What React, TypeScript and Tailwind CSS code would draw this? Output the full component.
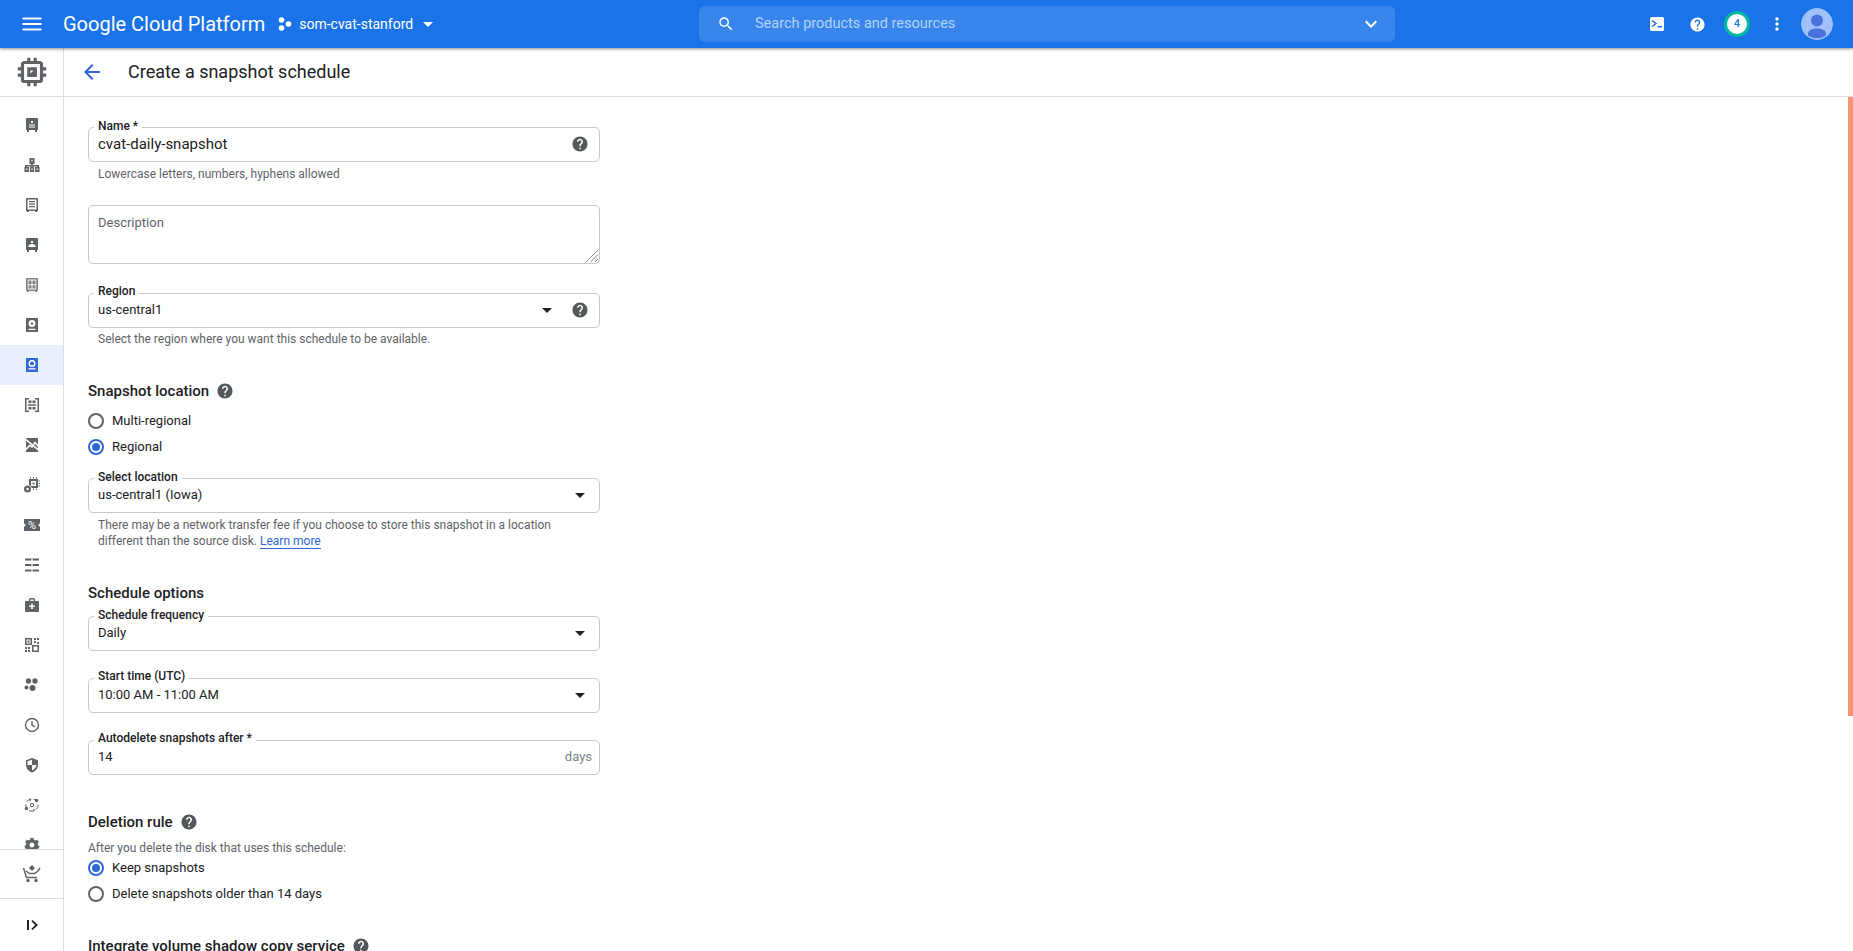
import type { ReactNode } from "react";

const HELP_PATH =
	"M12 2C6.48 2 2 6.48 2 12s4.48 10 10 10 10-4.48 10-10S17.52 2 12 2zm1 17h-2v-2h2v2zm2.07-7.75l-.9.92C13.45 12.9 13 13.5 13 15h-2v-.5c0-1.1.45-2.1 1.17-2.83l1.24-1.26c.37-.36.59-.86.59-1.41 0-1.1-.9-2-2-2s-2 .9-2 2H8c0-2.21 1.79-4 4-4s4 1.79 4 4c0 .88-.36 1.68-.93 2.25z";

function Help({ className = "", size = 18 }: { className?: string; size?: number }) {
	return (
		<svg width={size} height={size} viewBox="0 0 24 24" fill="currentColor" className={`shrink-0 text-[#54585c] ${className}`}>
			<path d={HELP_PATH} />
		</svg>
	);
}

function Caret({ className = "text-[#202124]" }: { className?: string }) {
	return (
		<svg width="24" height="24" viewBox="0 0 24 24" fill="currentColor" className={`shrink-0 ${className}`}>
			<path d="M7 10l5 5 5-5z" />
		</svg>
	);
}

// sidebar glyphs, all drawn on an 18x18 grid
const sideIcons: ReactNode[] = [
	<>
		<path d="M4 2h10a1 1 0 011 1v11h-1v2h-2v-2H6v2H4v-2H3V3a1 1 0 011-1z" />
		<path fill="#fff" d="M8 5h2v2H8zM6 8.5h6v1H6zM6 10.500h6v1H6z" />
	</>,
	<>
		<path d="M6.500 2h5v6h-1.700v1H16v2h.500v5H12v-5h2.300v-.500H9.800v.500H11v5H7v-5h1.200v-.500H3.700v.500H6v5H1.500v-5H2V9h6.200V8H6.500z" />
		<path fill="#fff" d="M8.300 3.800h1.400v1.400H8.300zM3.200 12.500h1.200v1.500H3.200zM8.400 12.500h1.200v1.500H8.400zM13.600 12.500h1.200v1.500h-1.200z" />
	</>,
	<>
		<path fillRule="evenodd" d="M4 2h10a1 1 0 011 1v12h-1v1h-2v-1H6v1H4v-1H3V3a1 1 0 011-1zm.5 1.500v10h9v-10z" />
		<path d="M6 5h6v1.200H6zM6 7.500h6v1.200H6zM6 10h6v1.200H6z" />
	</>,
	<>
		<path d="M4 2h10a1 1 0 011 1v11h-1v2h-2v-2H6v2H4v-2H3V3a1 1 0 011-1z" />
		<path fill="#fff" d="M8 5h2v2H8zM5.500 10c0-1.300 1.800-2 3.500-2s3.500.7 3.500 2v1h-7z" />
	</>,
	<>
		<path opacity=".8" fillRule="evenodd" d="M4 2h10a1 1 0 011 1v12h-1v1h-2v-1H6v1H4v-1H3V3a1 1 0 011-1zm.7 1.500v10h8.600v-10z" />
		<path opacity=".8" d="M5.500 4.500h3v3.800h-3zM9.500 4.500h3v3.800h-3zM5.500 9.300h3v3.200h-3zM9.500 9.300h3v3.200h-3z" />
	</>,
	<>
		<path d="M3 2h12v14H3z" />
		<path fill="#fff" d="M9 4a3.500 3.500 0 100 7 3.500 3.500 0 000-7zM5.500 12.800h7V14h-7z" />
		<circle cx="9" cy="7.500" r="1.200" />
	</>,
	<>
		<path d="M3 2h12v14H3z" />
		<path fill="#fff" fillRule="evenodd" d="M9 4a3.500 3.500 0 100 7 3.500 3.500 0 000-7zm0 1.500a2 2 0 110 4 2 2 0 010-4zM5.500 12.300h7v1.200h-7z" />
	</>,
	<path d="M2 2h4v1.500H3.500v11H6V16H2zM12 2h4v14h-4v-1.500h2.500v-11H12zM5.500 4.500h3V7h-3zM9.500 4.500h3V7h-3zM5.500 11h3v2.500h-3zM9.500 11h3v2.500h-3zM4.800 8.300h8.400v1.400H4.800z" />,
	<>
		<path d="M3 2h12v14H3z" />
		<path fill="none" stroke="#fff" strokeWidth="1.500" d="M2 2.800l14 11.500M3 13.500l3.500-4 2.500 1.500 3-4.500 3.500 4" />
	</>,
	<>
		<path fillRule="evenodd" d="M6 3h9v9H6zm2 2v5h5V5z" />
		<path d="M9.500 6.500h2v2h-2zM7 1h1v1.500H7zM10 1h1v1.500h-1zM13 1h1v1.500h-1zM15.500 4.500H17v1h-1.500zM15.500 7H17v1h-1.500zM15.500 9.500H17v1h-1.500zM10 12.500h1V14h-1zM13 12.500h1V14h-1z" />
		<circle cx="4.500" cy="13" r="4.300" fill="#fff" />
		<circle cx="4.500" cy="13" r="3.500" />
		<circle cx="4.500" cy="13" r="1.200" fill="#fff" />
	</>,
	<>
		<path d="M1 3h16v4.500a1.500 1.500 0 000 3V15H1v-4.500a1.500 1.500 0 000-3z" />
		<text x="9" y="13" textAnchor="middle" fontSize="11" fontFamily="Roboto, sans-serif" fill="#fff">
			%
		</text>
	</>,
	<path d="M2 2.500h6.500v2H2zM9.500 2.500H16v2H9.500zM2 8h6.500v2H2zM9.500 8H16v2H9.500zM2 13.500h6.500v2H2zM9.500 13.500H16v2H9.500z" />,
	<>
		<path d="M6 5V3.500A1.500 1.500 0 017.500 2h3A1.500 1.500 0 0112 3.500V5h3a1 1 0 011 1v9a1 1 0 01-1 1H3a1 1 0 01-1-1V6a1 1 0 011-1zm1.500 0h3V3.500h-3z" />
		<path fill="#fff" d="M8.200 7.500h1.600v2h2v1.600h-2v2H8.200v-2h-2V9.500h2z" />
	</>,
	<>
		<path fillRule="evenodd" d="M2 2h7v7H2zm1.500 1.500v4h4v-4zM9 9h7v7H9zm1.500 1.500v4h4v-4z" />
		<path d="M11 2h2v2h-2zM14 2h2v2h-2zM11 5h2v2h-2zM14 6h2v2h-2zM2 11h2v2H2zM5 11h2v2H5zM2 14h2v2H2zM5 14h2v2H5zM4.500 4.500h2v2h-2z" />
	</>,
	<>
		<circle cx="5.500" cy="5" r="2.700" />
		<circle cx="12" cy="5" r="2.700" />
		<circle cx="3.500" cy="11.500" r="2" />
		<circle cx="9.500" cy="12" r="3" />
	</>,
	<>
		<circle cx="9" cy="9" r="6.500" fill="none" stroke="currentColor" strokeWidth="1.400" />
		<path fill="none" stroke="currentColor" strokeWidth="1.400" d="M9 5v4.200l3 1.800" />
	</>,
	<>
		<path d="M9 2l6 2.300v4.500c0 3.600-2.500 6.600-6 7.700-3.500-1.100-6-4.100-6-7.700V4.300z" />
		<path fill="#fff" d="M9 3.700v5.300H4.500V5.200zM9 9h4.500c-.3 2.500-2.100 4.600-4.500 5.500z" opacity=".95" />
	</>,
	<>
		<circle cx="9" cy="9" r="6.200" fill="none" stroke="currentColor" strokeWidth="1" strokeDasharray="5 2.500" />
		<circle cx="9" cy="9" r="1.700" fill="none" stroke="currentColor" strokeWidth="1" />
		<circle cx="13.500" cy="4.500" r="1.700" />
		<circle cx="3.500" cy="12.500" r="1.700" />
		<path d="M9.500 14l2-1.500v3zM8.500 4l-2 1.500v-3z" />
	</>,
	<path fillRule="evenodd" d="M7.500 2h3l.4 1.800 1.500.7 1.700-.8 1.800 2.300-1.200 1.400.2 1.600 1.600.9-.7 2.800-1.800.1-1 1.300.4 1.800H4.600l.4-1.800-1-1.300-1.800-.1-.7-2.800 1.600-.9.200-1.600L2.100 6l1.800-2.300 1.700.8 1.500-.7zM9 6.500a2.500 2.500 0 100 5 2.500 2.500 0 000-5z" />,
];

function SideIcon({ children }: { children: ReactNode }) {
	return (
		<svg width="18" height="18" viewBox="0 0 18 18" fill="currentColor">
			{children}
		</svg>
	);
}

function Sidebar() {
	return (
		<aside className="flex w-[64px] shrink-0 flex-col border-r border-[#dadce0] text-[#5f6368]">
			<div className="flex h-[49px] shrink-0 items-center justify-center border-b border-[#dadce0]">
				<svg width="38" height="38" viewBox="0 0 24 24" fill="currentColor">
					<path d="M15 9H9v6h6V9zm-2 4h-2v-2h2v2zm8-2V9h-2V7c0-1.100-.9-2-2-2h-2V3h-2v2h-2V3H9v2H7c-1.100 0-2 .9-2 2v2H3v2h2v2H3v2h2v2c0 1.100.9 2 2 2h2v2h2v-2h2v2h2v-2h2c1.100 0 2-.9 2-2v-2h2v-2h-2v-2h2zm-4 6H7V7h10v10z" />
					<path d="M9 15l6-6v6z" />
				</svg>
			</div>
			<nav className="min-h-0 flex-1 overflow-hidden pt-2">
				{sideIcons.map((icon, i) => (
					<div
						key={i}
						className={`flex h-10 items-center justify-center ${i === 6 ? "bg-[#e8f0fe] text-[#3367d6]" : ""}`}
					>
						<SideIcon>{icon}</SideIcon>
					</div>
				))}
			</nav>
			<div className="flex h-[49px] shrink-0 items-center justify-center border-t border-[#dadce0]">
				<svg width="20" height="20" viewBox="0 0 20 20" fill="currentColor">
					<path d="M10 1l3 3-3 3-3-3z" />
					<path fill="none" stroke="currentColor" strokeWidth="1.500" d="M1.500 4l3 9.500h10.500M4 7l3.500 2.500h5L16 7l2-3" />
					<circle cx="6" cy="16.500" r="1.700" />
					<circle cx="14" cy="16.500" r="1.700" />
				</svg>
			</div>
			<div className="flex h-[53px] shrink-0 items-center justify-center border-t border-[#dadce0] text-[#202124]">
				<svg width="14" height="14" viewBox="0 0 14 14" fill="currentColor">
					<path d="M2 2h2v10H2zM7.500 2L13 7l-5.500 5-1.200-1.200L10.300 7 6.300 3.200z" />
				</svg>
			</div>
		</aside>
	);
}

function TopBar() {
	return (
		<header className="relative z-10 flex h-12 shrink-0 items-center bg-[#1a73e8] text-white shadow-[0_1px_3px_rgba(60,64,67,0.6)]">
			<div className="flex w-[699px] shrink-0 items-center">
				<svg width="24" height="24" viewBox="0 0 24 24" fill="currentColor" className="ml-[20px]">
					<path d="M2.500 5.500h19v2h-19zM2.500 11h19v2h-19zM2.500 16.500h19v2h-19z" />
				</svg>
				<span className="ml-[19px] text-[20px] leading-none whitespace-nowrap">Google Cloud Platform</span>
				<svg width="14" height="14" viewBox="0 0 14 14" fill="currentColor" className="ml-[13px]">
					<circle cx="3.500" cy="3" r="2.800" />
					<circle cx="3.500" cy="11" r="2.800" />
					<circle cx="10.500" cy="7" r="2.800" />
				</svg>
				<span className="ml-[7px] text-[14px] whitespace-nowrap">som-cvat-stanford</span>
				<Caret className="ml-[3px] text-white" />
			</div>
			<div className="flex h-9 w-[696px] shrink-0 items-center rounded-md bg-white/[0.13] pr-[12px] pl-[18px]">
				<svg width="18" height="18" viewBox="0 0 24 24" fill="currentColor">
					<path d="M15.500 14h-.79l-.28-.27A6.470 6.470 0 0016 9.500 6.500 6.500 0 109.500 16c1.610 0 3.090-.59 4.230-1.570l.27.28v.79l5 4.990L20.490 19l-4.990-5zm-6 0C7.010 14 5 11.990 5 9.500S7.010 5 9.500 5 14 7.010 14 9.500 11.990 14 9.500 14z" />
				</svg>
				<span className="ml-[20px] text-[14.5px] text-[#b5d2fb]">Search products and resources</span>
				<svg width="24" height="24" viewBox="0 0 24 24" fill="currentColor" className="ml-auto">
					<path d="M7.410 8.590L12 13.170l4.590-4.580L18 10l-6 6-6-6z" />
				</svg>
			</div>
			<div className="ml-auto flex items-center pr-[16px]">
				<div className="flex w-10 justify-center">
					<svg width="14" height="14" viewBox="0 0 14 14">
						<rect width="14" height="14" rx="1.500" fill="#fff" />
						<path d="M2 3.500L6 6.500 2 9.500" fill="none" stroke="#1a73e8" strokeWidth="1.500" />
						<path d="M7.500 9h4.500v1.500H7.500z" fill="#1a73e8" />
					</svg>
				</div>
				<div className="flex w-10 justify-center">
					<Help className="!text-white" size={17} />
				</div>
				<div className="flex w-10 justify-center">
					<div className="flex h-[26px] w-[26px] items-center justify-center rounded-full border-[3px] border-[#00b8a0] bg-white text-[11px] font-medium text-[#1a73e8]">
						4
					</div>
				</div>
				<div className="flex w-10 justify-center">
					<svg width="20" height="20" viewBox="0 0 24 24" fill="currentColor">
						<path d="M12 8c1.100 0 2-.9 2-2s-.9-2-2-2-2 .9-2 2 .9 2 2 2zm0 2c-1.100 0-2 .9-2 2s.9 2 2 2 2-.9 2-2-.9-2-2-2zm0 6c-1.100 0-2 .9-2 2s.9 2 2 2 2-.9 2-2-.9-2-2-2z" />
					</svg>
				</div>
				<div className="flex w-10 justify-center">
					<svg width="32" height="32" viewBox="0 0 32 32" className="rounded-full">
						<circle cx="16" cy="16" r="16" fill="#a0c1fa" />
						<circle cx="16" cy="12.500" r="6" fill="#4a72dd" />
						<path d="M16 20.500c-5 0-9 2-9 5v2a15.900 15.900 0 0018 0v-2c0-3-4-5-9-5z" fill="#4a72dd" />
					</svg>
				</div>
			</div>
		</header>
	);
}

function Outlined({
	label,
	lift,
	className = "",
	children,
}: {
	label?: string;
	lift?: boolean;
	className?: string;
	children: ReactNode;
}) {
	return (
		<div className={`relative flex h-[35px] w-[512px] items-center rounded-[5px] border border-[#c6c8ca] pr-[7px] pb-[2px] pl-[9px] ${className}`}>
			{label && (
				<span
					className={`absolute left-[5px] bg-white px-[4px] text-[12px] leading-[18px] font-medium whitespace-nowrap text-[#202124] ${
						lift ? "top-[-12px]" : "top-[-11px]"
					}`}
				>
					{label}
				</span>
			)}
			{children}
		</div>
	);
}

function SelectField({
	label,
	value,
	lift,
	className,
}: {
	label: string;
	value: string;
	lift?: boolean;
	className?: string;
}) {
	return (
		<Outlined label={label} lift={lift} className={className}>
			<span className="text-[13px] text-[#202124]">{value}</span>
			<Caret className="ml-auto text-[#202124]" />
		</Outlined>
	);
}

function Hint({ children, className = "" }: { children: ReactNode; className?: string }) {
	return <p className={`pl-[10px] text-[12px] leading-[16px] text-[#5f6368] ${className}`}>{children}</p>;
}

function Heading({ children, help, className = "" }: { children: string; help?: boolean; className?: string }) {
	return (
		<div className={`flex h-5 items-center gap-[7px] ${className}`}>
			<h2 className="text-[15px] leading-5 font-medium whitespace-nowrap text-[#202124]">{children}</h2>
			{help && <Help />}
		</div>
	);
}

function Radio({ label, checked }: { label: string; checked?: boolean }) {
	return (
		<div className="flex h-[26px] items-center gap-2">
			<span
				className={`flex h-4 w-4 items-center justify-center rounded-full border-2 ${
					checked ? "border-[#3367d6]" : "border-[#5f6368]"
				}`}
			>
				{checked && <span className="h-2 w-2 rounded-full bg-[#3367d6]" />}
			</span>
			<span className="text-[13px] text-[#202124]">{label}</span>
		</div>
	);
}

function SnapshotForm() {
	return (
		<div className="pt-[30px] pl-[24px]">
			<Outlined label="Name *">
				<input
					defaultValue="cvat-daily-snapshot"
					className="min-w-0 flex-1 pt-[2px] text-[15px] text-[#202124] outline-none"
				/>
				<Help className="mr-[3px]" />
			</Outlined>
			<Hint className="mt-[4px]">Lowercase letters, numbers, hyphens allowed</Hint>

			<div className="relative mt-[23px] h-[59px] w-[512px]">
				<textarea
					placeholder="Description"
					className="block h-full w-full resize-none rounded-[5px] border border-[#c6c8ca] px-[9px] pt-[9px] text-[13px] leading-[16px] outline-none placeholder:text-[#5f6368]"
				/>
				<svg width="14" height="14" viewBox="0 0 14 14" className="absolute right-[1px] bottom-[1px] text-[#80868b]">
					<path d="M1 13L13 1M5.500 13L13 5.500M10 13l3-3" fill="none" stroke="currentColor" strokeWidth="1" />
				</svg>
			</div>

			<Outlined label="Region" lift className="mt-[29px]">
				<span className="text-[13px] text-[#202124]">us-central1</span>
				<Caret className="ml-auto text-[#202124]" />
				<Help className="mr-[3px] ml-[12px]" />
			</Outlined>
			<Hint className="mt-[3px]">Select the region where you want this schedule to be available.</Hint>

			<Heading help className="mt-[34px]">
				Snapshot location
			</Heading>
			<div className="mt-[7px]">
				<Radio label="Multi-regional" />
				<Radio label="Regional" checked />
			</div>
			<SelectField label="Select location" value="us-central1 (Iowa)" className="mt-[18px]" />
			<Hint className="mt-[4px] w-[512px]">
				There may be a network transfer fee if you choose to store this snapshot in a location
				<br />
				different than the source disk.{" "}
				<a className="border-b border-[#3367d6] text-[#3367d6]">Learn more</a>
			</Hint>

			<Heading className="mt-[34px]">Schedule options</Heading>
			<SelectField label="Schedule frequency" value="Daily" className="mt-[13px]" />
			<SelectField label="Start time (UTC)" value="10:00 AM - 11:00 AM" lift className="mt-[27px]" />
			<Outlined label="Autodelete snapshots after *" lift className="mt-[27px]">
				<span className="text-[13px] text-[#202124]">14</span>
				<span className="ml-auto text-[13px] text-[#80868b]">days</span>
			</Outlined>

			<Heading help className="mt-[37px]">
				Deletion rule
			</Heading>
			<p className="mt-[8px] text-[12px] leading-[16px] text-[#5f6368]">After you delete the disk that uses this schedule:</p>
			<div className="mt-[-1px]">
				<Radio label="Keep snapshots" checked />
				<Radio label="Delete snapshots older than 14 days" />
			</div>

			<Heading help className="mt-[29px]">
				Integrate volume shadow copy service
			</Heading>
		</div>
	);
}

export default function App() {
	return (
		<div className="flex h-screen flex-col overflow-hidden bg-white [font-family:Roboto,sans-serif]">
			<TopBar />
			<div className="flex min-h-0 flex-1">
				<Sidebar />
				<main className="relative min-w-0 flex-1 overflow-hidden">
					<div className="flex h-[49px] items-center border-b border-[#dadce0]">
						<button className="ml-[16px] text-[#3367d6]">
							<svg width="24" height="24" viewBox="0 0 24 24" fill="currentColor" className="block">
								<path d="M20 11H7.830l5.590-5.590L12 4l-8 8 8 8 1.410-1.410L7.830 13H20v-2z" />
							</svg>
						</button>
						<h1 className="ml-[24px] pb-[1px] text-[18px] font-normal text-[#202124]">Create a snapshot schedule</h1>
					</div>
					<SnapshotForm />
					<div className="absolute top-[49px] right-0 h-[619px] w-[5px] bg-[#f59473]" />
				</main>
			</div>
		</div>
	);
}
